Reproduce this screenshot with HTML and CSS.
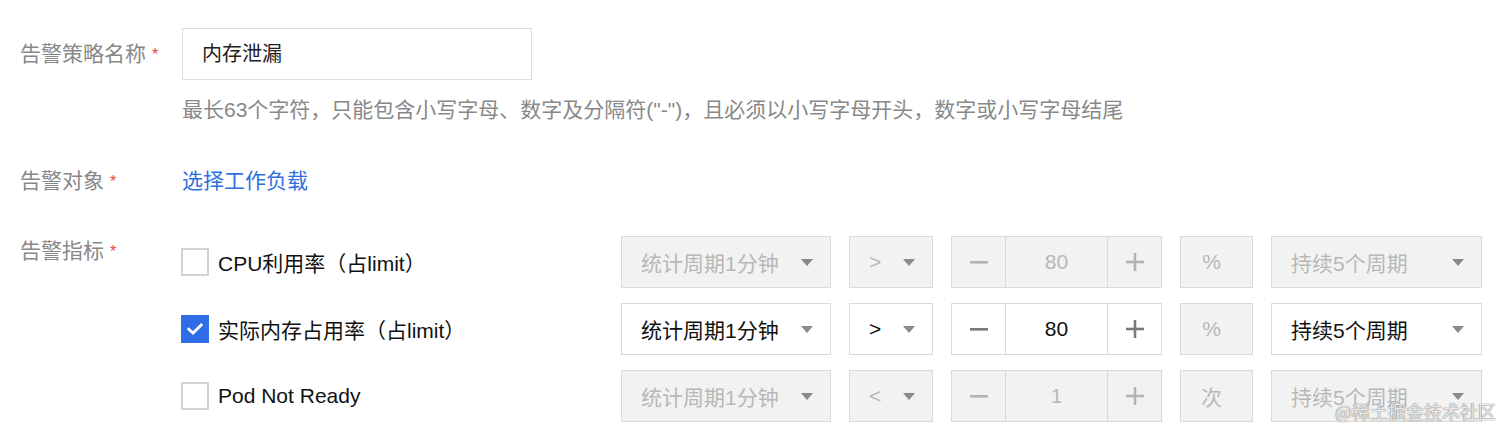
FILE: index.html
```html
<!DOCTYPE html>
<html lang="zh">
<head>
<meta charset="utf-8">
<title>告警策略</title>
<link rel="stylesheet" href="styles.css">
</head>
<body>
<div class="form">
  <div class="form-row row-name">
    <div class="label label-tall">告警策略名称<span class="req">*</span></div>
    <div class="field">
      <div class="text-input">内存泄漏</div>
      <div class="help">最长63个字符，只能包含小写字母、数字及分隔符("-")，且必须以小写字母开头，数字或小写字母结尾</div>
    </div>
  </div>

  <div class="form-row row-target">
    <div class="label">告警对象<span class="req">*</span></div>
    <div class="field"><a class="link">选择工作负载</a></div>
  </div>

  <div class="form-row row-metrics">
    <div class="label">告警指标<span class="req">*</span></div>
    <div class="field metrics">
      <div class="metric disabled">
        <div class="check-label"><span class="checkbox"></span><span>CPU利用率（占limit）</span></div>
        <div class="select sel-period"><span>统计周期1分钟</span><i class="caret"></i></div>
        <div class="select sel-op"><span>&gt;</span><i class="caret"></i></div>
        <div class="number">
          <span class="step"><svg width="18" height="18" viewBox="0 0 18 18"><rect x="0" y="8" width="18" height="2.6"/></svg></span>
          <span class="num-val">80</span>
          <span class="step"><svg width="18" height="18" viewBox="0 0 18 18"><rect x="0" y="7.7" width="18" height="2.6"/><rect x="7.7" y="0" width="2.6" height="18"/></svg></span>
        </div>
        <div class="unit">%</div>
        <div class="select sel-dur"><span>持续5个周期</span><i class="caret"></i></div>
      </div>

      <div class="metric">
        <div class="check-label"><span class="checkbox checked"><svg width="16" height="12" viewBox="0 0 16 12"><path d="M1.8 6.2 L6 10 L14.2 2" fill="none" stroke="#fff" stroke-width="2.8" stroke-linecap="square"/></svg></span><span>实际内存占用率（占limit）</span></div>
        <div class="select sel-period"><span>统计周期1分钟</span><i class="caret"></i></div>
        <div class="select sel-op"><span>&gt;</span><i class="caret"></i></div>
        <div class="number">
          <span class="step"><svg width="18" height="18" viewBox="0 0 18 18"><rect x="0" y="8" width="18" height="2.6"/></svg></span>
          <span class="num-val">80</span>
          <span class="step"><svg width="18" height="18" viewBox="0 0 18 18"><rect x="0" y="7.7" width="18" height="2.6"/><rect x="7.7" y="0" width="2.6" height="18"/></svg></span>
        </div>
        <div class="unit">%</div>
        <div class="select sel-dur"><span>持续5个周期</span><i class="caret"></i></div>
      </div>

      <div class="metric disabled">
        <div class="check-label"><span class="checkbox"></span><span>Pod Not Ready</span></div>
        <div class="select sel-period"><span>统计周期1分钟</span><i class="caret"></i></div>
        <div class="select sel-op"><span>&lt;</span><i class="caret"></i></div>
        <div class="number">
          <span class="step"><svg width="18" height="18" viewBox="0 0 18 18"><rect x="0" y="8" width="18" height="2.6"/></svg></span>
          <span class="num-val">1</span>
          <span class="step"><svg width="18" height="18" viewBox="0 0 18 18"><rect x="0" y="7.7" width="18" height="2.6"/><rect x="7.7" y="0" width="2.6" height="18"/></svg></span>
        </div>
        <div class="unit">次</div>
        <div class="select sel-dur"><span>持续5个周期</span><i class="caret"></i></div>
      </div>
    </div>
  </div>
</div>
<div class="watermark">@稀土掘金技术社区</div>
</body>
</html>
```

FILE: styles.css
```css
html, body {
  margin: 0;
  padding: 0;
  background: #fff;
}
body {
  position: relative;
  width: 1512px;
  height: 436px;
  overflow: hidden;
  font-family: "Liberation Sans", "Noto Sans CJK SC", sans-serif;
  font-size: 21px;
  color: #111;
}
.form {
  padding: 28px 0 0 20px;
}
.form-row {
  display: grid;
  grid-template-columns: 162px 1fr;
}
.label {
  color: #888;
  line-height: 30px;
  height: 30px;
  white-space: nowrap;
}
.label-tall {
  line-height: 52px;
  height: 52px;
}
.req {
  color: #e54545;
  font-size: 16px;
  margin-left: 6px;
  vertical-align: 1px;
}
.text-input {
  box-sizing: border-box;
  width: 350px;
  height: 52px;
  border: 1px solid #dcdcdc;
  padding-left: 19px;
  line-height: 50px;
  font-size: 20px;
  color: #222;
}
.help {
  margin-top: 15px;
  line-height: 30px;
  color: #888;
  white-space: nowrap;
}
.row-target {
  margin-top: 41px;
}
.link {
  color: #2f6fe2;
  line-height: 30px;
  display: block;
}
.row-metrics {
  margin-top: 40px;
}
.metrics {
  display: flex;
  flex-direction: column;
  gap: 15px;
}
.metric {
  display: flex;
  align-items: center;
  gap: 18px;
  height: 52px;
}
.check-label {
  width: 422px;
  display: flex;
  align-items: center;
  gap: 9px;
  margin-left: -1px;
  color: #111;
  white-space: nowrap;
}
.checkbox {
  box-sizing: border-box;
  width: 28px;
  height: 28px;
  border: 2px solid #d2d2d2;
  background: #fff;
  display: flex;
  align-items: center;
  justify-content: center;
  flex: none;
}
.checkbox.checked {
  background: #2f6de8;
  border-color: #2f6de8;
}
.select, .number, .unit {
  box-sizing: border-box;
  height: 52px;
  border: 1px solid #dadada;
  background: #fff;
  color: #111;
}
.select {
  display: flex;
  align-items: center;
  justify-content: space-between;
  padding: 0 17px 0 19px;
}
.sel-period { width: 210px; }
.sel-op { width: 84px; }
.sel-dur { width: 211px; }
.caret {
  width: 0;
  height: 0;
  border-left: 6px solid transparent;
  border-right: 6px solid transparent;
  border-top: 7px solid #8a8a8a;
  margin-top: 1px;
}
.number {
  width: 211px;
  display: flex;
}
.step {
  width: 53px;
  display: flex;
  align-items: center;
  justify-content: center;
  fill: #7a7a7a;
}
.num-val {
  flex: 1;
  border-left: 1px solid #dadada;
  border-right: 1px solid #dadada;
  display: flex;
  align-items: center;
  justify-content: center;
}
.unit {
  width: 73px;
  background: #f2f2f2;
  color: #b8b8b8;
  display: flex;
  align-items: center;
  justify-content: center;
  padding-right: 10px;
}
.disabled .select,
.disabled .number {
  background: #f2f2f2;
  color: #b8b8b8;
}
.disabled .step {
  fill: #b3b3b3;
}
.watermark {
  position: absolute;
  right: 16px;
  bottom: 14px;
  font-family: "Noto Sans CJK SC", sans-serif;
  font-size: 18px;
  color: rgba(255, 255, 255, 0.85);
  text-shadow: 0 0 1px #777, 0 0 1px #777;
  line-height: 22px;
}
```
